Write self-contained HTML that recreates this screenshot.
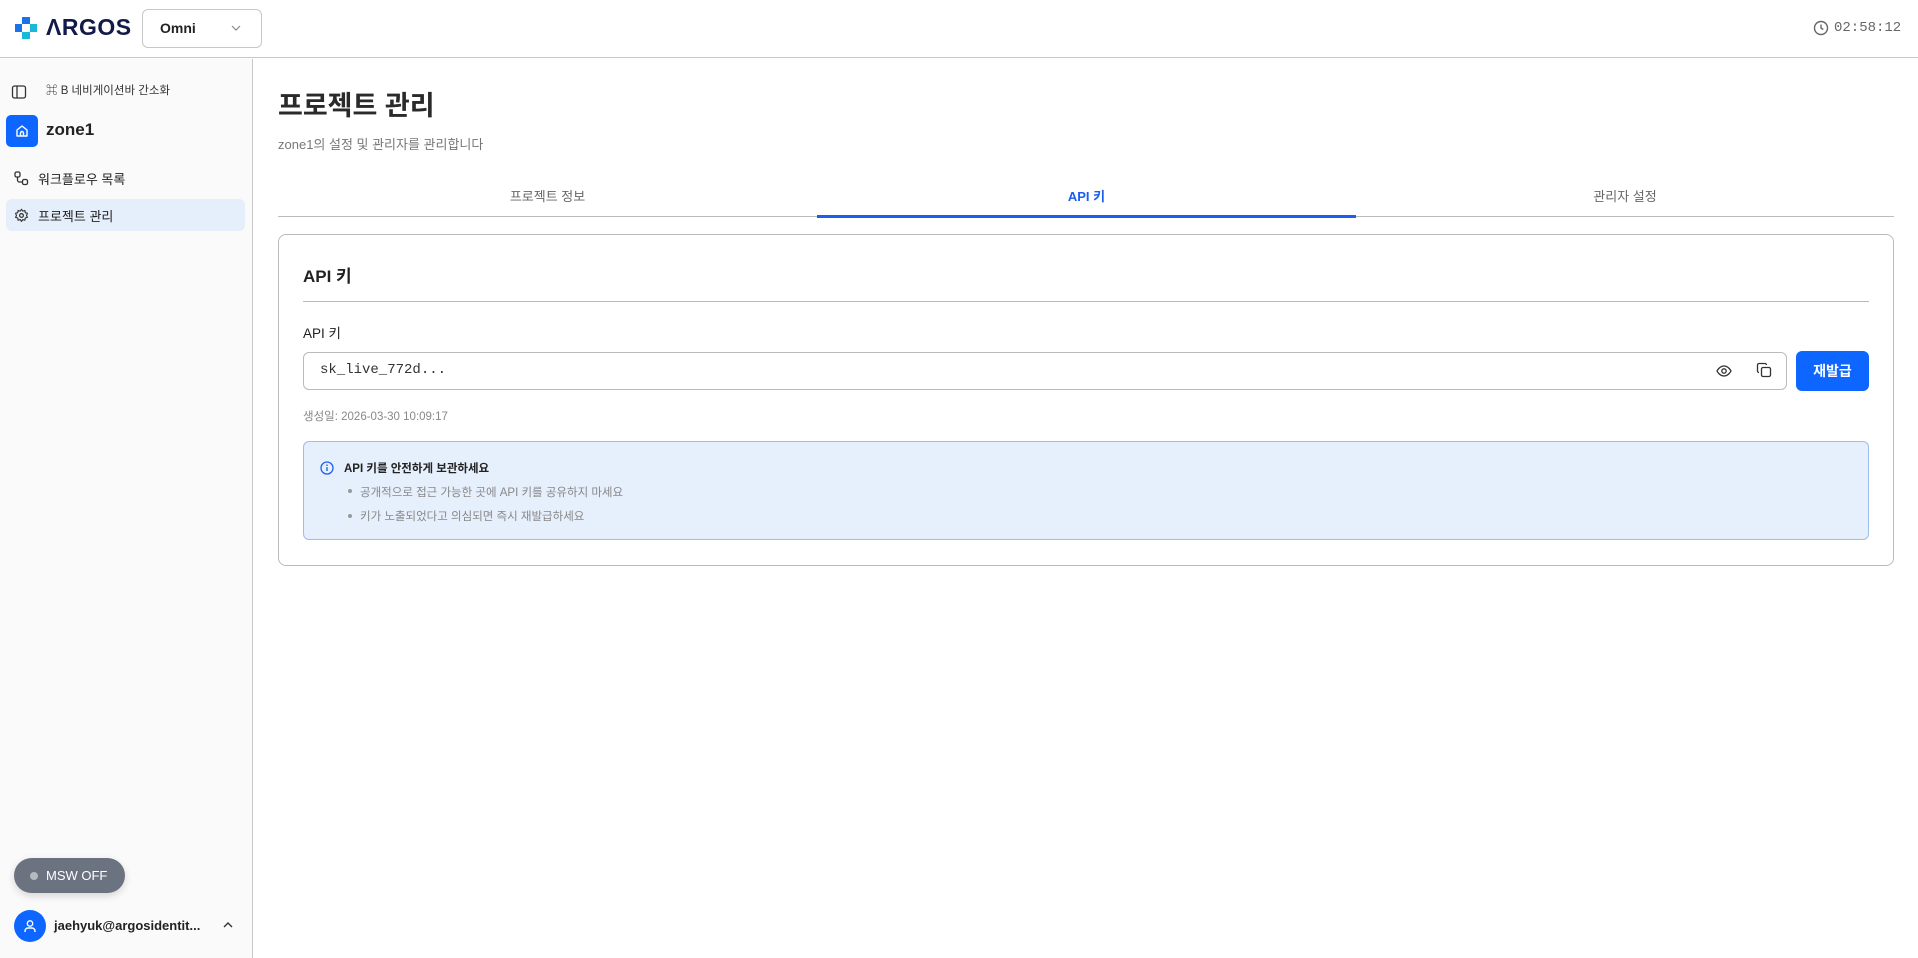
<!DOCTYPE html>
<html><head><meta charset="utf-8"><style>
*{box-sizing:border-box;margin:0;padding:0}
body{width:1918px;height:958px;overflow:hidden;background:#fff;font-family:"Liberation Sans","Noto Sans CJK KR",sans-serif;color:#222;position:relative}
.a{position:absolute}
</style></head><body>
<div class="a" style="left:0;top:0;width:1918px;height:58px;border-bottom:1px solid #c8c8c8;background:#fff"></div>
<svg class="a" style="left:14px;top:16px" width="24" height="24" viewBox="0 0 24 24"><path d="M8 1h8v7h-8z M1 8h7v8H1z" fill="#1a73e8"/><path d="M16 8h7v8h-7z M8 16h8v7H8z" fill="#17b8d8"/><path d="M8 8h8v8H8z" fill="#fff"/></svg>
<div class="a" style="left:46px;top:14px;font-size:23px;font-weight:900;color:#121a4a;letter-spacing:0.5px">ΛRGOS</div>
<div class="a" style="left:142px;top:9px;width:120px;height:39px;border:1px solid #c8c8c8;border-radius:6px"></div>
<div class="a" style="left:160px;top:20px;font-size:14px;font-weight:bold;color:#222">Omni</div>
<svg class="a" style="left:230px;top:23px" width="12" height="10" viewBox="0 0 12 10"><path d="M2 3l4 4 4-4" stroke="#888" fill="none" stroke-width="1.2"/></svg>
<svg class="a" style="left:1813px;top:20px" width="16" height="16" viewBox="0 0 16 16"><circle cx="8" cy="8" r="6.5" stroke="#666" fill="none" stroke-width="1.4"/><path d="M8 4.5V8l2.3 1.5" stroke="#666" fill="none" stroke-width="1.4"/></svg>
<div class="a" style="left:1834px;top:20px;font-family:'Liberation Mono',monospace;font-size:14px;color:#666">02:58:12</div>
<div class="a" style="left:0;top:59px;width:253px;height:899px;background:#fafafa;border-right:1px solid #c8c8c8"></div>
<svg class="a" style="left:11px;top:84px" width="16" height="16" viewBox="0 0 16 16"><rect x="1.5" y="2" width="13" height="12" rx="2" stroke="#333" fill="none" stroke-width="1.3"/><path d="M6 2v12" stroke="#333" stroke-width="1.3"/></svg>
<div class="a" style="left:46px;top:82px;font-size:11.5px;color:#333">⌘ B 네비게이션바 간소화</div>
<div class="a" style="left:6px;top:115px;width:32px;height:32px;background:#0d66ff;border-radius:5px"></div>
<svg class="a" style="left:14px;top:123px" width="16" height="16" viewBox="0 0 16 16"><path d="M3 7l5-4 5 4v6H3z M6.5 13v-3a1.5 1.5 0 013 0v3" stroke="#fff" fill="none" stroke-width="1.4" stroke-linejoin="round"/></svg>
<div class="a" style="left:46px;top:120px;font-size:17px;font-weight:bold;color:#222">zone1</div>
<svg class="a" style="left:14px;top:171px" width="15" height="15" viewBox="0 0 15 15"><rect x="1" y="1" width="5" height="5" rx="1.5" stroke="#333" fill="none" stroke-width="1.3"/><rect x="8.5" y="8.5" width="5" height="5" rx="1.5" stroke="#333" fill="none" stroke-width="1.3"/><path d="M3.5 6v3a2 2 0 002 2h3" stroke="#333" fill="none" stroke-width="1.3"/></svg>
<div class="a" style="left:38px;top:169px;font-size:13px;color:#222">워크플로우 목록</div>
<div class="a" style="left:6px;top:199px;width:239px;height:32px;background:#e5eefb;border-radius:6px"></div>
<svg class="a" style="left:14px;top:208px" width="15" height="15" viewBox="0 0 24 24"><circle cx="12" cy="12" r="3" stroke="#333" fill="none" stroke-width="2"/><path d="M12 2l2 3 3.5-1 .5 3.5 3.5 1-1.5 3.5 1.5 3-3.5 1-.5 3.5-3.5-1-2 3-2-3-3.5 1-.5-3.5-3.5-1 1.5-3-1.5-3.5 3.5-1 .5-3.5 3.5 1z" stroke="#333" fill="none" stroke-width="1.8" stroke-linejoin="round"/></svg>
<div class="a" style="left:38px;top:206px;font-size:13px;color:#222">프로젝트 관리</div>
<div class="a" style="left:14px;top:858px;width:111px;height:35px;background:#6b7280;border-radius:18px;box-shadow:0 3px 8px rgba(0,0,0,0.15)"></div>
<div class="a" style="left:30px;top:872px;width:8px;height:8px;border-radius:50%;background:#b5b9c0"></div>
<div class="a" style="left:46px;top:868px;font-size:13px;color:#fff">MSW OFF</div>
<div class="a" style="left:14px;top:910px;width:32px;height:32px;border-radius:50%;background:#0d66ff"></div>
<svg class="a" style="left:22px;top:918px" width="16" height="16" viewBox="0 0 16 16"><circle cx="8" cy="5.5" r="2.7" stroke="#fff" fill="none" stroke-width="1.4"/><path d="M3 14v-1a3 3 0 013-3h4a3 3 0 013 3v1" stroke="#fff" fill="none" stroke-width="1.4"/></svg>
<div class="a" style="left:54px;top:918px;font-size:13px;font-weight:bold;color:#222">jaehyuk@argosidentit...</div>
<svg class="a" style="left:222px;top:920px" width="12" height="10" viewBox="0 0 12 10"><path d="M2 7l4-4 4 4" stroke="#333" fill="none" stroke-width="1.4"/></svg>
<div class="a" style="left:278px;top:84px;font-size:27px;font-weight:bold;color:#2a2a2a">프로젝트 관리</div>
<div class="a" style="left:278px;top:134px;font-size:13px;color:#777">zone1의 설정 및 관리자를 관리합니다</div>
<div class="a" style="left:278px;top:216px;width:1616px;height:1px;background:#bbb"></div>
<div class="a" style="left:278px;top:186px;width:539px;text-align:center;font-size:13px;color:#666">프로젝트 정보</div>
<div class="a" style="left:817px;top:186px;width:539px;text-align:center;font-size:13px;font-weight:bold;color:#1a5ff0">API 키</div>
<div class="a" style="left:1356px;top:186px;width:538px;text-align:center;font-size:13px;color:#666">관리자 설정</div>
<div class="a" style="left:817px;top:215px;width:539px;height:3px;background:#1a5ff0"></div>
<div class="a" style="left:278px;top:234px;width:1616px;height:332px;border:1px solid #bbb;border-radius:8px"></div>
<div class="a" style="left:303px;top:262px;font-size:17px;font-weight:bold;color:#222">API 키</div>
<div class="a" style="left:303px;top:301px;width:1566px;height:1px;background:#bbb"></div>
<div class="a" style="left:303px;top:322px;font-size:13.5px;color:#222">API 키</div>
<div class="a" style="left:303px;top:352px;width:1484px;height:38px;border:1px solid #bbb;border-radius:6px"></div>
<div class="a" style="left:320px;top:362px;font-family:'Liberation Mono',monospace;font-size:14px;color:#333">sk_live_772d...</div>
<svg class="a" style="left:1716px;top:363px" width="16" height="16" viewBox="0 0 16 16"><path d="M1 8s2.5-5 7-5 7 5 7 5-2.5 5-7 5-7-5-7-5z" stroke="#333" fill="none" stroke-width="1.3"/><circle cx="8" cy="8" r="2.2" stroke="#333" fill="none" stroke-width="1.3"/></svg>
<svg class="a" style="left:1756px;top:362px" width="16" height="16" viewBox="0 0 16 16"><rect x="5.5" y="5.5" width="9" height="9" rx="1.5" stroke="#333" fill="none" stroke-width="1.3"/><path d="M3 10.5a1.5 1.5 0 01-1.5-1.5V3A1.5 1.5 0 013 1.5h6A1.5 1.5 0 0110.5 3" stroke="#333" fill="none" stroke-width="1.3"/></svg>
<div class="a" style="left:1796px;top:351px;width:73px;height:40px;background:#0d66ff;border-radius:6px;color:#fff;font-size:14px;font-weight:bold;text-align:center;line-height:40px">재발급</div>
<div class="a" style="left:303px;top:408px;font-size:11.5px;color:#888">생성일: 2026-03-30 10:09:17</div>
<div class="a" style="left:303px;top:441px;width:1566px;height:99px;background:#e6effc;border:1px solid #9fbdf0;border-radius:6px"></div>
<svg class="a" style="left:320px;top:461px" width="14" height="14" viewBox="0 0 14 14"><circle cx="7" cy="7" r="6" stroke="#1a5ff0" fill="none" stroke-width="1.3"/><path d="M7 6.2V10" stroke="#1a5ff0" stroke-width="1.4"/><circle cx="7" cy="4.2" r="0.8" fill="#1a5ff0"/></svg>
<div class="a" style="left:344px;top:460px;font-size:11.5px;font-weight:bold;color:#222">API 키를 안전하게 보관하세요</div>
<div class="a" style="left:348px;top:489px;width:4px;height:4px;border-radius:50%;background:#999"></div>
<div class="a" style="left:360px;top:484px;font-size:11.5px;color:#888">공개적으로 접근 가능한 곳에 API 키를 공유하지 마세요</div>
<div class="a" style="left:348px;top:514px;width:4px;height:4px;border-radius:50%;background:#999"></div>
<div class="a" style="left:360px;top:508px;font-size:11.5px;color:#888">키가 노출되었다고 의심되면 즉시 재발급하세요</div>
</body></html>
